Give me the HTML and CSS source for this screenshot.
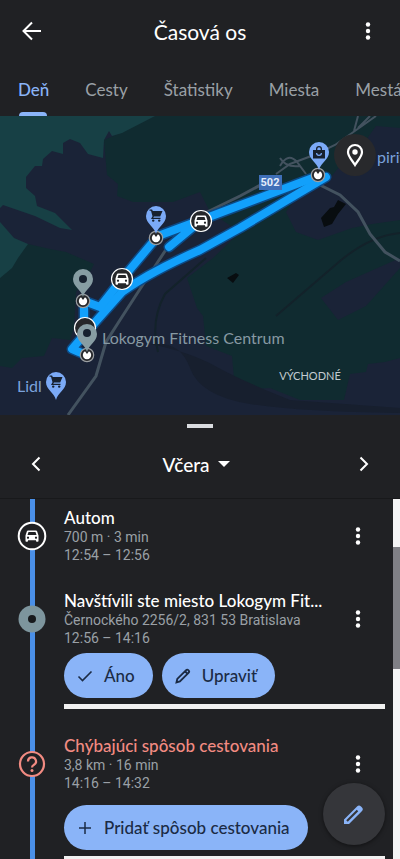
FILE: index.html
```html
<!DOCTYPE html>
<html lang="sk">
<head>
    <meta charset="UTF-8">
    <meta name="viewport" content="width=device-width, initial-scale=1.0">
    <title>Časová os</title>
    <link rel="stylesheet" href="styles.css">
</head>
<body>
    <header class="topbar">
        <button class="icon-btn" aria-label="Späť">
            <svg width="24" height="24" viewBox="0 0 24 24"><path d="M21 12H4M12 3.500L3.500 12l8.500 8.500" fill="none" stroke="currentColor" stroke-width="2"/></svg>
        </button>
        <h1>Časová os</h1>
        <button class="icon-btn" aria-label="Viac možností">
            <svg class="dots" width="6" height="20" viewBox="0 0 6 20"><circle cx="3" cy="3.500" r="2.200"/><circle cx="3" cy="10" r="2.200"/><circle cx="3" cy="16.500" r="2.200"/></svg>
        </button>
    </header>

    <nav class="tabs">
        <a href="#den" class="active">Deň</a>
        <a href="#cesty">Cesty</a>
        <a href="#statistiky">Štatistiky</a>
        <a href="#miesta">Miesta</a>
        <a href="#mesta">Mestá</a>
    </nav>

    <section class="map">
        <svg class="map-canvas" viewBox="0 0 400 299" preserveAspectRatio="xMidYMid slice">
            <defs>
                <g id="cart">
                    <path d="M-6.500-5.500h2.600l.7 1.500H6.500L4.200 1.500h-6.200l-.8 1.300H4.500v1.300h-9.500l1.500-2.900L-5-4.300h-1.500z"/>
                    <circle cx="-2.800" cy="5.600" r="1.200"/><circle cx="3.200" cy="5.600" r="1.200"/>
                </g>
                <path id="pin" d="M0 18C-2 10-10 8-10 0a10 10 0 0 1 20 0C10 8 2 10 0 18z"/>
                <g id="car">
                    <path fill-rule="evenodd" d="M-4-5.500h8q.8 0 1.100.8L6.500-.5V5q0 .8-.8.800h-.9Q4 5.800 4 5V4.200h-8V5q0 .8-.8.800h-.9q-.8 0-.8-.8V-.5l1.400-4.200q.3-.8 1.100-.8zM-3.500-4l-1 3h9l-1-3zM-4 .5a1.100 1.100 0 1 0 .01 0zM4 .5a1.100 1.100 0 1 0 .01 0z"/>
                </g>
                <g id="stop">
                    <circle r="6.700" fill="#26272a" stroke="#9b9fa2" stroke-width="1.200"/>
                    <path d="M-2-3.700L0-1 2-3.700A4.200 4.200 0 1 1-2-3.700z" fill="#fff"/>
                </g>
            </defs>

            <!-- land -->
            <rect width="400" height="299" fill="#1a2337"/>
            <path fill="#102b30" d="M155 0H360L400 0V12L376 10 366 24 345 44 330 62 322 70 300 76 286 96 296 116 318 124 352 112 372 108 400 104V142L346 166 321 182 338 204 366 190 400 152V242L385 246 368 248 366 256 350 258 344 284 300 284 270 272 235 274 232 240 206 230 203 200 197 192 187 162 213 142 240 116 210 96 200 76 173 86H133L117 80 118 68 107 59 104 24 120 17z"/>
            <path fill="#102b30" d="M0 125L28 128 50 133 66 136 94 148 86 164 76 176 74 212 70 224 52 222 44 240 22 242 12 252 0 250z"/>
            <path fill="#174045" d="M0 0H155L122 17 112 20 109 15 104 24 103 42 88 38 80 27 70 23 63 27V38L52 35 43 43 42 50 35 50 26 61V72L35 80 37 90 55 97 72 114 60 112 35 100 3 89 0 92z"/>
            <path fill="#174045" d="M0 106L14 122 28 128 18 142 12 152 0 162z"/>
            <path fill="#171f2e" d="M150 228Q190 236 215 250 T290 284L400 292V297Q300 296 250 288T190 252 150 228z"/>
            <path fill="#080d10" d="M321 102L330 92 334 91 338 84 346 88 338 98 332 108 324 111zM227 162L236 157 239 159 233 167z"/>
            <path d="M400 117Q370 120 340 145L276 200M206 142L165 178Q150 205 158 236" fill="none" stroke="#13222a" stroke-width="2"/>

            <!-- roads -->
            <g fill="none" stroke="#43525f" stroke-width="3">
                <path d="M376 0L352 17 335 29 314 39 290 48 276 58 M358 0L354 15M370 0L358 12 M280 50Q288 36 297 46L306 58 M280 42Q286 52 300 50" stroke-width="2"/>
                <path d="M277 60L240 80 205 97M167 132L142 170 120 204 106 226 96 260 68 299M318 68L340 79 358 96 370 118 385 136 400 145"/>
            </g>

            <!-- route -->
            <g class="route-edge">
                <path d="M326 61L240 112 200 134Q150 156 122 176L98 203 72 233 86 239"/>
                <path d="M318 60L201 104 158 120 122 163 100 191 84 185V215M199 106L169 131"/>
            </g>
            <g class="route">
                <path d="M326 61L240 112 200 134Q150 156 122 176L98 203 72 233 86 239"/>
                <path d="M318 60L201 104 158 120 122 163 100 191 84 185V215M199 106L169 131"/>
            </g>

            <!-- labels -->
            <rect x="259" y="59" width="23" height="15" fill="#3f6fb8"/>
            <text class="road-no" x="270" y="70" text-anchor="middle">502</text>
            <text class="place blue" x="377" y="47">pirit</text>
            <text class="place grey" x="102" y="228">Lokogym Fitness Centrum</text>
            <text class="place blue" x="17" y="276">Lidl</text>
            <text class="district" x="310" y="264" text-anchor="middle">VÝCHODNÉ</text>

            <!-- stops and pins -->
            <use href="#stop" x="156" y="122"/>
            <use href="#stop" x="318" y="59"/>
            <use href="#stop" x="83" y="185"/>
            <g fill="#26272a" stroke="#fff" stroke-width="1.200">
                <circle cx="201" cy="105" r="10.500"/>
                <circle cx="122" cy="163" r="10.500"/>
                <circle cx="85" cy="212" r="10.500"/>
            </g>
            <use href="#car" x="201" y="105" fill="#fff"/>
            <use href="#car" x="122" y="163" fill="#fff"/>
            <use href="#stop" x="87" y="239"/>
            <g fill="#7baaf7">
                <use href="#pin" x="156" y="100"/>
                <use href="#pin" x="319" y="36"/>
                <use href="#pin" x="56" y="266"/>
            </g>
            <g fill="#879da3">
                <use href="#pin" x="83" y="163"/>
                <use href="#pin" x="87" y="218"/>
            </g>
            <g fill="#17212f">
                <circle cx="83" cy="163" r="4"/>
                <circle cx="87" cy="217" r="4"/>
                <use href="#cart" x="156" y="99"/>
                <use href="#cart" x="56" y="265"/>
                <path fill-rule="evenodd" d="M313 34h3v-1a3 3 0 0 1 6 0v1h3v8.500h-12zM317.300 34h3.400v-1a1.700 1.700 0 0 0-3.400 0zM316 37a3 3 0 0 0 6 0h-1.200a1.800 1.800 0 0 1-3.600 0z"/>
            </g>
        </svg>
        <button class="map-pin-btn" aria-label="Miesto na mape">
            <svg width="18" height="24" viewBox="0 0 18 24"><path d="M9 22C6 17 2 13.500 2 9a7 7 0 0 1 14 0c0 4.500-4 8-7 13z" fill="none" stroke="#fff" stroke-width="2.200"/><circle cx="9" cy="9" r="2.700" fill="#fff"/></svg>
        </button>
    </section>

    <section class="date-sheet">
        <div class="handle"></div>
        <div class="date-row">
            <button class="icon-btn" aria-label="Predchádzajúci deň">
                <svg width="10" height="16" viewBox="0 0 10 16"><path d="M8.500 1.500L2 8l6.500 6.500" fill="none" stroke="currentColor" stroke-width="2"/></svg>
            </button>
            <button class="date-btn">Včera
                <svg width="12" height="6" viewBox="0 0 12 6"><path d="M0 0h12L6 6z" fill="currentColor"/></svg>
            </button>
            <button class="icon-btn" aria-label="Nasledujúci deň">
                <svg width="10" height="16" viewBox="0 0 10 16"><path d="M1.500 1.500L8 8l-6.500 6.500" fill="none" stroke="currentColor" stroke-width="2"/></svg>
            </button>
        </div>
    </section>

    <main class="timeline">
        <div class="entries">
            <article class="entry">
                <svg class="node" width="30" height="30" viewBox="-15 -15 30 30"><circle r="13.300" fill="#202124" stroke="#fff" stroke-width="2"/><use href="#car" fill="#fff"/></svg>
                <div class="info">
                    <h2>Autom</h2>
                    <p>700 m · 3 min</p>
                    <p>12:54 – 12:56</p>
                </div>
                <button class="more" aria-label="Viac">
                    <svg class="dots" width="6" height="20" viewBox="0 0 6 20"><circle cx="3" cy="3.500" r="2.200"/><circle cx="3" cy="10" r="2.200"/><circle cx="3" cy="16.500" r="2.200"/></svg>
                </button>
            </article>

            <article class="entry">
                <svg class="node" width="30" height="30" viewBox="-15 -15 30 30"><circle r="13.500" fill="#7d959d"/><circle r="4" fill="#17191c"/></svg>
                <div class="info">
                    <h2>Navštívili ste miesto Lokogym Fit...</h2>
                    <p>Černockého 2256/2, 831 53 Bratislava</p>
                    <p>12:56 – 14:16</p>
                </div>
                <button class="more" aria-label="Viac">
                    <svg class="dots" width="6" height="20" viewBox="0 0 6 20"><circle cx="3" cy="3.500" r="2.200"/><circle cx="3" cy="10" r="2.200"/><circle cx="3" cy="16.500" r="2.200"/></svg>
                </button>
                <div class="actions">
                    <button class="chip">
                        <svg width="16" height="16" viewBox="0 0 16 16"><path d="M1.500 8.500l4 4L14.500 3.500" fill="none" stroke="currentColor" stroke-width="1.600"/></svg>
                        Áno
                    </button>
                    <button class="chip">
                        <svg width="16" height="16" viewBox="0 0 16 16"><path d="M1.500 14.500l.8-3.600 8.600-8.600q1.300-1.300 2.600 0t0 2.600l-8.600 8.600zM10 3.200L12.700 6" fill="none" stroke="currentColor" stroke-width="1.900"/></svg>
                        Upraviť
                    </button>
                </div>
                <hr>
            </article>

            <article class="entry missing">
                <svg class="node" width="30" height="30" viewBox="-15 -15 30 30"><circle r="12" fill="#202124" stroke="#f28b82" stroke-width="2.200"/><path d="M-4-2.500a4 4 0 1 1 6 3.300Q0 2 0 3.500" fill="none" stroke="#f28b82" stroke-width="2.200"/><circle cy="6.500" r="1.500" fill="#f28b82"/></svg>
                <div class="info">
                    <h2>Chýbajúci spôsob cestovania</h2>
                    <p>3,8 km · 16 min</p>
                    <p>14:16 – 14:32</p>
                </div>
                <button class="more" aria-label="Viac">
                    <svg class="dots" width="6" height="20" viewBox="0 0 6 20"><circle cx="3" cy="3.500" r="2.200"/><circle cx="3" cy="10" r="2.200"/><circle cx="3" cy="16.500" r="2.200"/></svg>
                </button>
                <div class="actions">
                    <button class="chip">
                        <svg width="16" height="16" viewBox="0 0 16 16"><path d="M8 2v12M2 8h12" fill="none" stroke="currentColor" stroke-width="1.500"/></svg>
                        Pridať spôsob cestovania
                    </button>
                </div>
                <hr>
            </article>
        </div>
        <div class="scroll-track"><div class="scroll-thumb"></div></div>
        <button class="fab" aria-label="Upraviť deň">
            <svg width="24" height="24" viewBox="0 0 24 24"><path d="M2 22v-4.500L15 4.500q2-2 4 0l.8.800q2 2 0 4L7 22z" fill="#8ab4f8"/><path d="M5 19L15.500 8.500" stroke="#35363a" stroke-width="2.200"/></svg>
        </button>
    </main>
</body>
</html>
```

FILE: styles.css
```css
/* General Styles */
* {
    box-sizing: border-box;
}
body {
    margin: 0;
    height: 100vh;
    display: flex;
    flex-direction: column;
    overflow: hidden;
    background-color: #202124;
    color: #fff;
    font-family: Lato, "Open Sans", sans-serif;
}
button {
    border: none;
    padding: 0;
    background: none;
    color: inherit;
    font-family: inherit;
    cursor: pointer;
}
svg {
    display: block;
}
.dots {
    fill: #fff;
}
.icon-btn {
    width: 40px;
    height: 40px;
    display: flex;
    align-items: center;
    justify-content: center;
}

/* Top bar */
.topbar {
    display: flex;
    align-items: center;
    justify-content: space-between;
    height: 62px;
    padding: 0 12px;
    flex-shrink: 0;
}
.topbar h1 {
    margin: 0;
    font-size: 21px;
    font-weight: 400;
}

/* Tabs */
.tabs {
    display: flex;
    gap: 36px;
    height: 54px;
    padding-left: 18px;
    flex-shrink: 0;
    overflow: hidden;
}
.tabs a {
    display: flex;
    align-items: center;
    color: #9aa0a6;
    font-size: 17px;
    text-decoration: none;
    white-space: nowrap;
}
.tabs .active {
    position: relative;
    color: #8ab4f8;
    font-weight: 500;
}
.tabs .active::after {
    content: "";
    position: absolute;
    left: 1px;
    right: 2px;
    bottom: 0;
    height: 4px;
    border-radius: 4px 4px 0 0;
    background-color: #8ab4f8;
}

/* Map */
.map {
    position: relative;
    height: 299px;
    flex-shrink: 0;
}
.map-canvas {
    width: 100%;
    height: 100%;
}
.route-edge,
.route {
    fill: none;
    stroke: #0d4a86;
    stroke-width: 11px;
    stroke-linejoin: round;
    stroke-linecap: round;
}
.route {
    stroke: #12a0fb;
    stroke-width: 8px;
}
.place {
    font-size: 16px;
}
.blue {
    fill: #7ba2dc;
}
.grey {
    fill: #8799a3;
}
.road-no {
    font: bold 11px Roboto, sans-serif;
    fill: #e3ecfb;
}
.district {
    font-size: 11px;
    fill: #c3cbd0;
}
.map-pin-btn {
    position: absolute;
    top: 18px;
    right: 24px;
    width: 42px;
    height: 42px;
    display: flex;
    align-items: center;
    justify-content: center;
    border-radius: 50%;
    background-color: #28292c;
}

/* Date picker */
.date-sheet {
    height: 84px;
    flex-shrink: 0;
    padding-top: 9px;
    border-bottom: 1px solid #18191b;
}
.handle {
    width: 26px;
    height: 4px;
    margin: 0 auto;
    background-color: #dadce0;
}
.date-row {
    display: flex;
    align-items: center;
    justify-content: space-between;
    padding: 16px 16px 0;
}
.date-btn {
    display: flex;
    align-items: center;
    gap: 8px;
    margin-right: 8px;
    font-size: 19px;
    font-weight: 500;
}

/* Timeline */
.timeline {
    position: relative;
    display: flex;
    flex: 1;
    min-height: 0;
    overflow: hidden;
}
.entries {
    flex: 1;
    min-width: 0;
    padding: 9px 8px 0 0;
    background: linear-gradient(#4a8fe7, #4a8fe7) no-repeat 30px 0 / 5px 100%;
}
.entry {
    display: grid;
    grid-template-columns: 64px 1fr 54px;
    align-items: center;
    margin-bottom: 27px;
}
.node {
    margin-left: 17px;
}
.info {
    min-width: 0;
    white-space: nowrap;
}
.info h2 {
    margin: 0;
    font-size: 17px;
    font-weight: 500;
    line-height: 20px;
}
.info p {
    margin: 0;
    color: #9aa0a6;
    font-family: Roboto, sans-serif;
    font-size: 14px;
    line-height: 18px;
}
.missing h2 {
    color: #f28b82;
}
.more {
    height: 40px;
    display: flex;
    align-items: center;
    justify-content: center;
}
.actions {
    grid-column: 2 / -1;
    display: flex;
    gap: 9px;
    padding: 6px 0;
}
.missing .actions {
    padding-top: 13px;
}
.chip {
    display: flex;
    align-items: center;
    gap: 11px;
    height: 45px;
    padding: 0 18px 0 13px;
    border-radius: 23px;
    background-color: #8ab4f8;
    color: #1b2b45;
    font-size: 17px;
    font-weight: 500;
    white-space: nowrap;
}
.entry hr {
    grid-column: 2 / -1;
    width: 100%;
    height: 5px;
    margin: 0;
    border: none;
    background-color: #f1f1f1;
}

/* Scrollbar */
.scroll-track {
    width: 7px;
    padding-top: 48px;
    background-color: #f4f4f5;
}
.scroll-thumb {
    height: 39%;
    background-color: #808086;
}

/* Floating edit button */
.fab {
    position: absolute;
    right: 15px;
    bottom: 14px;
    width: 62px;
    height: 62px;
    display: flex;
    align-items: center;
    justify-content: center;
    border-radius: 50%;
    background-color: #35363a;
    box-shadow: 0 1px 4px rgba(0, 0, 0, 0.5);
}
```
